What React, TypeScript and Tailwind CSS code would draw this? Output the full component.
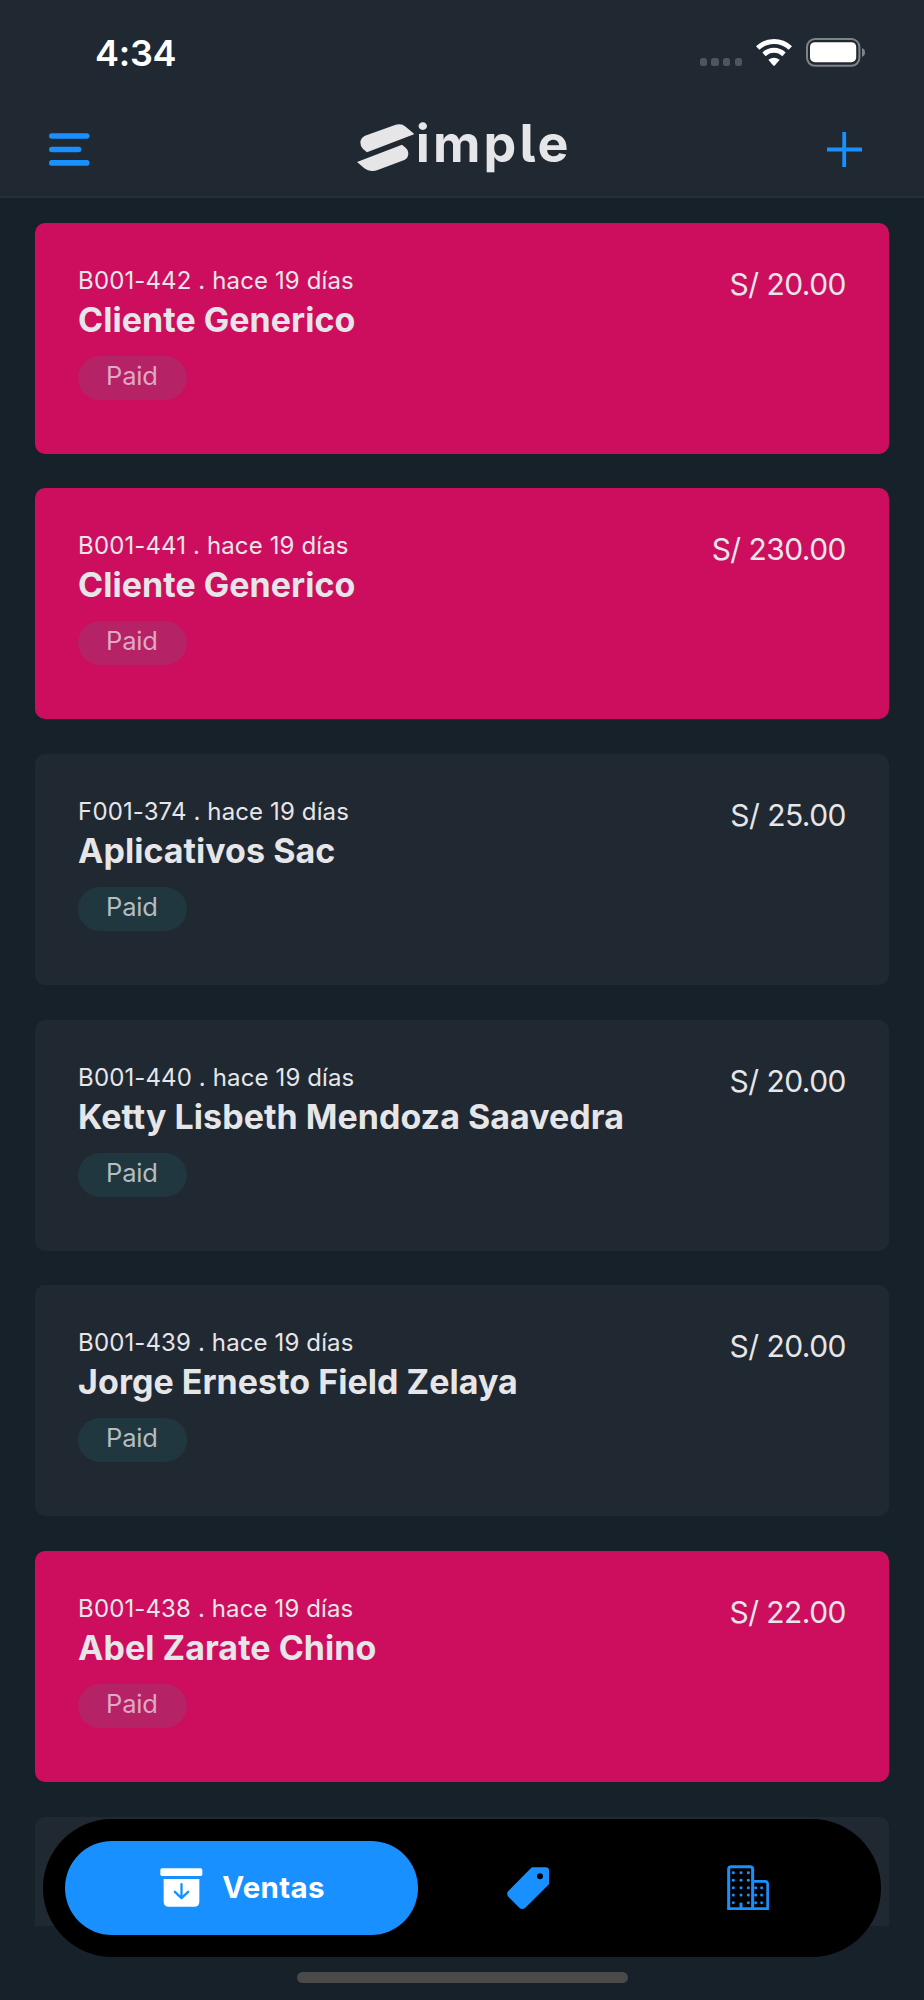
type Sale = {
  code: string;
  ago: string;
  client: string;
  amount: string;
  highlighted?: boolean;
};

const sales: Sale[] = [
  { code: "B001-442", ago: "hace 19 días", client: "Cliente Generico", amount: "S/ 20.00", highlighted: true },
  { code: "B001-441", ago: "hace 19 días", client: "Cliente Generico", amount: "S/ 230.00", highlighted: true },
  { code: "F001-374", ago: "hace 19 días", client: "Aplicativos Sac", amount: "S/ 25.00" },
  { code: "B001-440", ago: "hace 19 días", client: "Ketty Lisbeth Mendoza Saavedra", amount: "S/ 20.00" },
  { code: "B001-439", ago: "hace 19 días", client: "Jorge Ernesto Field Zelaya", amount: "S/ 20.00" },
  { code: "B001-438", ago: "hace 19 días", client: "Abel Zarate Chino", amount: "S/ 22.00", highlighted: true },
];

function WifiIcon() {
  return (
    <svg width="36" height="27" viewBox="0 0 108 81" fill="none">
      <path d="M5 27C33 1 75 1 103 27" stroke="#fff" strokeWidth="15" />
      <path d="M24 46C42 30 66 30 84 46" stroke="#fff" strokeWidth="15" />
      <path d="M37 62Q54 50 71 62L57 79Q54 82 51 79Z" fill="#fff" />
    </svg>
  );
}

function BatteryIcon() {
  return (
    <svg width="60" height="29" viewBox="0 0 60 29" fill="none">
      <rect x="1" y="1" width="52.4" height="26.8" rx="8" stroke="#7f8388" strokeWidth="2" />
      <rect x="4" y="4.2" width="46.2" height="20" rx="4.8" fill="#fff" />
      <path d="M56 10Q59 11 59 14.4T56 18.8Z" fill="#7f8388" />
    </svg>
  );
}

function StatusBar() {
  return (
    <div className="flex h-[104px] items-start justify-between pl-[95px] pr-[58px] pt-[38px]">
      <span className="mt-[-7px] text-[36px] leading-[44px] font-semibold tracking-[-0.25px] text-white">4:34</span>
      <div className="flex items-start">
        <div className="mr-[14px] mt-5 flex gap-[4.4px]">
          {[0, 1, 2, 3].map((dot) => (
            <span key={dot} className="h-2 w-[7.3px] rounded-[2.5px] bg-[#50545e]" />
          ))}
        </div>
        <div className="mr-[14px] mt-px">
          <WifiIcon />
        </div>
        <BatteryIcon />
      </div>
    </div>
  );
}

function Logo() {
  return (
    <div className="ml-[266.5px] mr-auto flex items-start text-[#e6e6e8]">
      <svg className="mt-[19.5px]" width="57.3" height="47.7" viewBox="80 70 172 143" fill="currentColor">
        <path d="M110 155L98 145Q90 138 90 125Q91 111 104 105L192 74Q212 66 226 78L252 100Z" />
        <path d="M215 132L226 141Q235 148 234 160Q233 173 222 178L142 208Q120 216 102 203L80 184Z" />
      </svg>
      <span className="ml-[2px] mt-[8px] text-[52px] leading-[64px] font-bold tracking-[3.1px] [font-feature-settings:'cv05']">
        imple
      </span>
    </div>
  );
}

function Header() {
  return (
    <header className="h-[198px] border-b-2 border-[#262e38] bg-[#202832]">
      <StatusBar />
      <div className="flex h-[92px] items-start pl-[49px] pr-[62px]">
        <button aria-label="Menu" className="mt-[29px]">
          <svg width="41" height="33" viewBox="0 0 41 33" fill="#1890ff">
            <rect x="0" y="0.2" width="40.5" height="5.6" rx="2.8" />
            <rect x="0" y="13.7" width="32.4" height="5.6" rx="2.8" />
            <rect x="0" y="27.1" width="40.5" height="5.6" rx="2.8" />
          </svg>
        </button>
        <Logo />
        <button aria-label="Add" className="mt-[27.5px]">
          <svg width="35" height="35" viewBox="0 0 35 35" stroke="#1890ff" strokeWidth="3.8">
            <path d="M17.2 0V35M0 17.5H35" />
          </svg>
        </button>
      </div>
    </header>
  );
}

function SaleCard({ sale }: { sale: Sale }) {
  return (
    <article
      className={`flex h-[231px] shrink-0 items-start justify-between rounded-[10px] px-[43.5px] pt-10 text-[#e6e6e8] ${
        sale.highlighted ? "bg-[#cd0d5e]" : "bg-[#202832]"
      }`}
    >
      <div className="flex flex-col items-start">
        <p className="text-[24px] leading-9 tracking-[0.12px]">
          {sale.code} . {sale.ago}
        </p>
        <h2 className="text-[34px] leading-[42.5px] font-bold tracking-[0.03px]">{sale.client}</h2>
        <span
          className={`mt-[14.5px] flex h-11 w-[109px] rounded-full pl-[28px] text-[25.5px] leading-[40.5px] tracking-[-0.2px] ${
            sale.highlighted ? "bg-[#b62266] text-[#dfa9c3]" : "bg-[#20373f] text-[#b6bcc0]"
          }`}
        >
          Paid
        </span>
      </div>
      <p className="mt-[3px] text-[30px] leading-9 tracking-[-0.55px]">{sale.amount}</p>
    </article>
  );
}

function ArchiveIcon() {
  return (
    <svg width="43" height="39" viewBox="481 234 128 118" fill="none">
      <rect x="481" y="235" width="127" height="23" rx="5" fill="#fff" />
      <path d="M491 267H599V335Q599 351 583 351H507Q491 351 491 335Z" fill="#fff" />
      <path d="M545 283V325M525 306L545 325L565 306" stroke="#1890ff" strokeWidth="7" strokeLinecap="round" strokeLinejoin="round" />
    </svg>
  );
}

function TagIcon() {
  return (
    <svg width="42.3" height="42.3" viewBox="135 230 127 127" fill="#1890ff">
      <path
        fillRule="evenodd"
        d="M213 231H251Q262 231 262 242V275Q262 281 258 285L190 352Q181 360 172 352L139 319Q132 310 139 302L205 235Q209 231 213 231ZM234 249A9 9 0 1 0 234 267A9 9 0 1 0 234 249Z"
      />
    </svg>
  );
}

function BuildingsIcon() {
  const rows = [248, 271, 293, 315, 338];
  return (
    <svg width="42.3" height="45" viewBox="795 225 127 135" fill="none">
      <path d="M800 356V238Q800 230 808 230H864Q872 230 872 238V356Z" stroke="#1890ff" strokeWidth="9" />
      <path d="M872 274H909Q917 274 917 282V356H872" stroke="#1890ff" strokeWidth="8" />
      <path d="M837 338V356" stroke="#1890ff" strokeWidth="9" />
      {rows.map((y) => (
        <g key={y} fill="#1890ff">
          <circle cx="814" cy={y} r="4.5" />
          {y < 338 && <circle cx="837" cy={y} r="4.5" />}
          <circle cx="859" cy={y} r="4.5" />
          {y > 271 && <circle cx="881" cy={y} r="4.5" />}
          {y > 271 && <circle cx="899" cy={y} r="4.5" />}
        </g>
      ))}
    </svg>
  );
}

function TabBar() {
  return (
    <nav className="absolute bottom-[43.5px] left-[43.2px] flex h-[137.5px] w-[837.5px] items-center rounded-full bg-black pl-[22px]">
      <button className="flex h-[94px] w-[353px] items-center rounded-full bg-[#1890ff] pl-[95px] text-white">
        <ArchiveIcon />
        <span className="mb-px ml-[19px] text-[29.5px] leading-9 font-bold tracking-[0.3px]">Ventas</span>
      </button>
      <button aria-label="Productos" className="ml-[89px]">
        <TagIcon />
      </button>
      <button aria-label="Empresas" className="mb-px ml-[178px]">
        <BuildingsIcon />
      </button>
    </nav>
  );
}

export default function App() {
  return (
    <div className="relative flex h-[2000px] w-[924px] flex-col overflow-hidden bg-[#17212a] font-['Inter',sans-serif]">
      <Header />
      <main className="flex h-[1728px] flex-col gap-[34.7px] overflow-hidden px-[34.6px] pt-[24.7px]">
        {sales.map((sale) => (
          <SaleCard key={sale.code} sale={sale} />
        ))}
        <div className="h-[231px] shrink-0 rounded-[10px] bg-[#202832]" />
      </main>
      <TabBar />
      <div className="absolute bottom-[17px] left-[297px] h-[11px] w-[331px] rounded-full bg-[#4a4a4a]" />
    </div>
  );
}
